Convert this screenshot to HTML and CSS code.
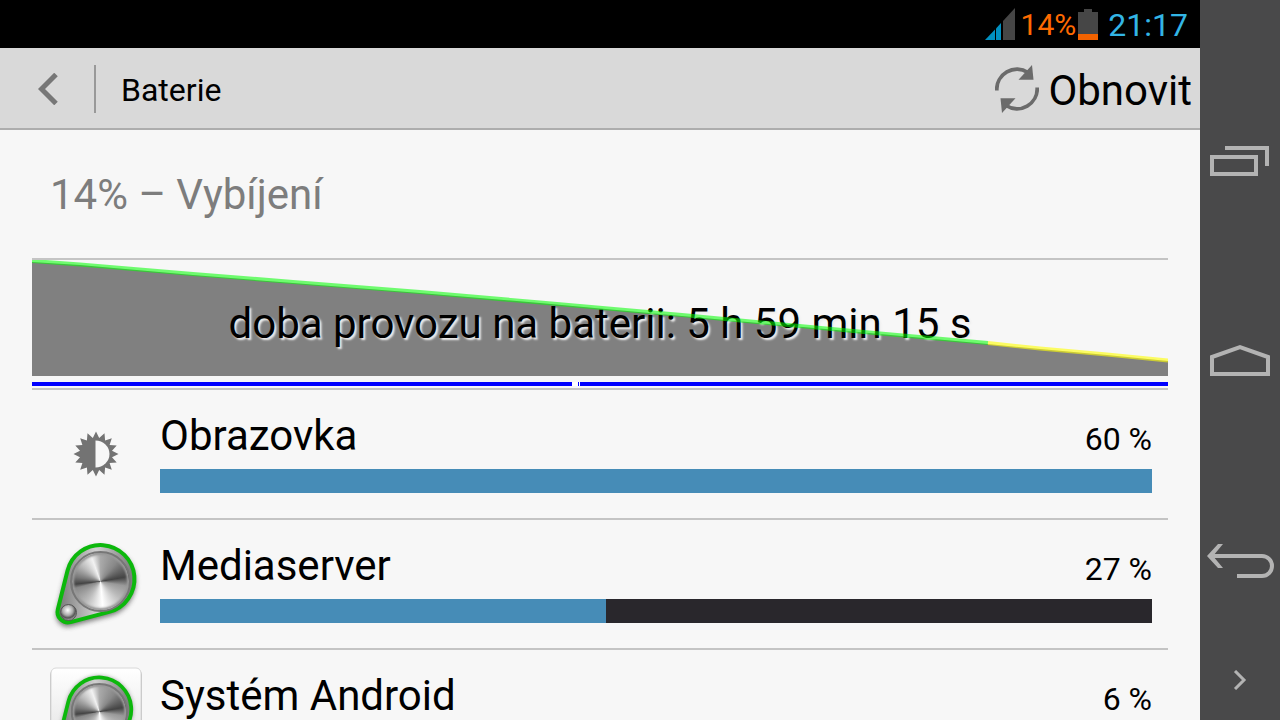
FILE: index.html
```html
<!DOCTYPE html>
<html lang="cs">
<head>
<meta charset="utf-8">
<meta name="viewport" content="width=device-width, initial-scale=1">
<title>Baterie</title>
<link rel="stylesheet" href="styles.css">
</head>
<body>
<div class="device">
  <div class="screen">
    <div class="status">
      <svg class="signal" width="30" height="32" viewBox="0 0 30 32" aria-hidden="true">
        <path d="M0 32 10 21.500V32Z" fill="#0090c1"/>
        <path d="M11 20.500 16 15V32H11Z" fill="#0090c1"/>
        <path d="M18 13 30 0V32H18Z" fill="#464646"/>
      </svg>
      <span class="status-level">14%</span>
      <svg class="cell" width="20" height="31" viewBox="0 0 20 31" aria-hidden="true">
        <path d="M6 0H14V3H20V25H0V3H6Z" fill="#464646"/>
        <path d="M0 25H20V31H0Z" fill="#f26200"/>
      </svg>
      <time class="clock">21:17</time>
    </div>
    <header class="bar">
      <button class="back" type="button" aria-label="Zpět">
        <svg width="20" height="32" viewBox="0 0 20 32"><path d="M18 1.500 3.500 16 18 30.500" fill="none" stroke="#777" stroke-width="5"/></svg>
      </button>
      <h1 class="title">Baterie</h1>
      <button class="refresh" type="button">
        <svg width="44" height="48" viewBox="0 0 44 48" aria-hidden="true">
          <g id="arc" fill="#6b6b6b">
            <path d="M1.800 25.500A20.200 20.200 0 0 1 33 7.500" fill="none" stroke="#6b6b6b" stroke-width="3.800"/>
            <path d="M37 0 38.500 14.800H23.500Z"/>
          </g>
          <use href="#arc" transform="rotate(180 22 24)"/>
        </svg>
        <span class="refresh-label">Obnovit</span>
      </button>
    </header>
    <main class="content">
      <h2 class="summary">14% – Vybíjení</h2>
      <section class="history">
        <div class="chart">
          <svg class="layer" viewBox="0 0 1136 116" preserveAspectRatio="none" aria-hidden="true">
            <path d="M0 2 48 5 161 15 261 23 388 33 508 43 650 56 848 74 956 84 1008 89 1075 95 1136 101V116H0Z" fill="#808080"/>
          </svg>
          <p class="runtime">doba provozu na baterii: 5 h 59 min 15 s</p>
          <svg class="layer" viewBox="0 0 1136 116" preserveAspectRatio="none" aria-hidden="true">
            <g fill="none" stroke-width="4">
              <path d="M0 1 48 4.500 161 14 261 22 388 32 508 42.500 650 55 848 73.500 956 83" stroke="#00ff00" stroke-opacity=".55"/>
              <path d="M956 83 1008 88.500 1075 94.500 1136 100.500" stroke="#ffff00" stroke-opacity=".6"/>
            </g>
          </svg>
        </div>
        <div class="activity"><i class="gap"></i><i class="gap"></i></div>
      </section>
      <ul class="usage">
        <li class="row">
          <svg class="icon" viewBox="-48 -48 96 96" aria-hidden="true">
            <path fill="#737373" d="M0-22.500 3.200-16 8.500-20.700 9.100-13.600 15.800-15.800 13.600-9.100 20.700-8.500 16-3.200 22.500 0 16 3.200 20.700 8.500 13.600 9.100 15.800 15.800 9.100 13.600 8.500 20.700 3.200 16 0 22.500-3.200 16-8.500 20.700-9.100 13.600-15.800 15.800-13.600 9.100-20.700 8.500-16 3.200-22.500 0-16-3.200-20.700-8.500-13.600-9.100-15.800-15.800-9.100-13.600-8.500-20.700-3.200-16Z"/>
            <path d="M-.5-13.500A14 13.500 0 0 1-.5 13.500Z" fill="#f7f7f7"/>
          </svg>
          <div class="body">
            <div class="line"><span class="name">Obrazovka</span><span class="share">60 %</span></div>
            <div class="track"><div class="fill" style="width:100%"></div></div>
          </div>
        </li>
        <li class="row">
          <svg class="icon" viewBox="0 0 96 96" aria-hidden="true">
            <defs>
              <filter id="soft" x="-20%" y="-20%" width="140%" height="140%"><feGaussianBlur stdDeviation="2.500"/></filter>
              <linearGradient id="plate" x1="0" y1="0" x2="1" y2="0"><stop offset="0" stop-color="#777"/><stop offset=".5" stop-color="#d0d0d0"/><stop offset="1" stop-color="#777"/></linearGradient>
              <linearGradient id="tile" x1="0" y1="0" x2="0" y2="1"><stop offset="0" stop-color="#fff"/><stop offset="1" stop-color="#ddd"/></linearGradient>
            </defs>
            <path d="M9.800 73.400 19.500 34.700A34 34 0 1 1 61.200 75.900L22.700 86.100A10.500 10.500 0 0 1 9.800 73.400Z" transform="translate(0 3)" fill="#555" stroke="#555" stroke-width="3" opacity=".75" filter="url(#soft)"/>
            <path d="M9.800 73.400 19.500 34.700A34 34 0 1 1 61.200 75.900L22.700 86.100A10.500 10.500 0 0 1 9.800 73.400Z" fill="url(#plate)" stroke="#0cb80c" stroke-width="4"/>
            <foreignObject x="22" y="15" width="61" height="61"><div class="knob"></div></foreignObject>
            <foreignObject x="12" y="68" width="17" height="17"><div class="knob knob-small"></div></foreignObject>
          </svg>
          <div class="body">
            <div class="line"><span class="name">Mediaserver</span><span class="share">27 %</span></div>
            <div class="track"><div class="fill" style="width:45%"></div></div>
          </div>
        </li>
        <li class="row">
          <svg class="icon" viewBox="0 0 96 96" aria-hidden="true">
            <rect x="2" y="3" width="92" height="92" rx="6" fill="#999" opacity=".6"/>
            <rect x="3" y="2" width="90" height="92" rx="5" fill="url(#tile)" stroke="#d8d8d8"/>
            <g transform="translate(2 3) scale(.94)">
              <path d="M9.800 73.400 19.500 34.700A34 34 0 1 1 61.200 75.900L22.700 86.100A10.500 10.500 0 0 1 9.800 73.400Z" fill="#555" stroke="#555" stroke-width="3" opacity=".6" filter="url(#soft)"/>
              <path d="M9.800 73.400 19.500 34.700A34 34 0 1 1 61.200 75.900L22.700 86.100A10.500 10.500 0 0 1 9.800 73.400Z" fill="url(#plate)" stroke="#0cb80c" stroke-width="4"/>
              <foreignObject x="22" y="15" width="61" height="61"><div class="knob"></div></foreignObject>
            </g>
          </svg>
          <div class="body">
            <div class="line"><span class="name">Systém Android</span><span class="share">6 %</span></div>
            <div class="track"><div class="fill" style="width:10%"></div></div>
          </div>
        </li>
      </ul>
    </main>
  </div>
  <nav class="keys" aria-label="Navigace">
    <button class="key" type="button" aria-label="Poslední aplikace">
      <svg width="72" height="40" viewBox="0 0 72 40"><g fill="none" stroke="#b3b3b3" stroke-width="4"><path d="M8 17H52V34H8Z"/><path d="M21 8H63V26"/></g></svg>
    </button>
    <button class="key" type="button" aria-label="Domů">
      <svg width="72" height="40" viewBox="0 0 72 40"><path d="M8 34V17L36 7 64 17V34Z" fill="none" stroke="#b3b3b3" stroke-width="4"/></svg>
    </button>
    <button class="key" type="button" aria-label="Zpět">
      <svg width="72" height="40" viewBox="0 0 72 40"><path d="M8 16H58A9.500 9.500 0 0 1 58 36H33" fill="none" stroke="#b3b3b3" stroke-width="4"/><path d="M3 16 14 4H19L9 16 19 28H14Z" fill="#b3b3b3"/></svg>
    </button>
    <button class="key" type="button" aria-label="Skrýt panel">
      <svg width="14" height="20" viewBox="0 0 14 20"><path d="M2 1 11 10 2 19" fill="none" stroke="#b3b3b3" stroke-width="3"/></svg>
    </button>
  </nav>
</div>
</body>
</html>
```
FILE: styles.css
```css
* {
  box-sizing: border-box;
}

body {
  margin: 0;
  font-family: Roboto, "Noto Sans", sans-serif;
  color: #000;
  background: #f7f7f7;
}

button {
  border: 0;
  padding: 0;
  background: none;
  font: inherit;
  color: inherit;
  cursor: pointer;
}

svg {
  display: block;
}

.device {
  display: flex;
  height: 100vh;
  overflow: hidden;
}

.screen {
  flex: 1;
  min-width: 0;
  display: flex;
  flex-direction: column;
}

.status {
  flex: none;
  display: flex;
  justify-content: flex-end;
  align-items: center;
  height: 48px;
  padding-right: 12px;
  background: #000;
  line-height: 48px;
}

.status-level {
  margin: 0 2px 0 6px;
  padding-top: 2px;
  font-size: 30px;
  color: #ff6a00;
}

.clock {
  margin-left: 10px;
  padding-top: 2px;
  font-size: 32px;
  color: #33b5e5;
}

.bar {
  flex: none;
  display: flex;
  align-items: center;
  height: 82px;
  padding: 2px 8px 0 0;
  background: #d9d9d9;
  border-bottom: 2px solid #adadad;
}

.back {
  display: flex;
  align-items: center;
  justify-content: center;
  width: 96px;
  height: 48px;
  padding-left: 2px;
  border-right: 2px solid #999;
}

.title {
  flex: 1;
  margin: 0 0 0 25px;
  padding-top: 2px;
  font-size: 32px;
  line-height: 48px;
  font-weight: 400;
}

.refresh {
  display: flex;
  align-items: center;
  gap: 9px;
  font-size: 42px;
  line-height: 48px;
}

.refresh-label {
  padding-top: 4px;
}

.content {
  flex: 1;
  min-height: 0;
  overflow: hidden;
  padding: 0 32px;
}

.summary {
  margin: 0;
  padding: 41px 18px 39px;
  border-bottom: 2px solid #c4c4c4;
  font-size: 42px;
  line-height: 48px;
  font-weight: 400;
  color: #7d7d7d;
}

.history {
  padding-bottom: 2px;
  border-bottom: 2px solid #c4c4c4;
}

.chart {
  display: grid;
  height: 116px;
}

.chart > * {
  grid-area: 1 / 1;
}

.layer {
  width: 100%;
  height: 116px;
}

.runtime {
  margin: 0;
  padding-top: 40px;
  text-align: center;
  font-size: 42px;
  line-height: 48px;
  text-shadow: 2px 2px 2px #eee;
}

.activity {
  display: flex;
  gap: 1px;
  height: 4px;
  margin-top: 6px;
  padding-left: 47.5%;
  background: #00f;
}

.gap {
  width: 6px;
  background: #fff;
}

.gap + .gap {
  width: 1px;
}

.usage {
  margin: 0;
  padding: 0;
  list-style: none;
}

.row {
  display: flex;
  align-items: center;
  gap: 16px;
  padding: 16px;
  border-bottom: 2px solid #c4c4c4;
}

.icon {
  flex: none;
  width: 96px;
  height: 96px;
}

.body {
  flex: 1;
  display: grid;
  gap: 6px;
  padding-top: 4px;
}

.line {
  display: flex;
  justify-content: space-between;
  align-items: baseline;
  line-height: 48px;
}

.name {
  font-size: 42px;
}

.share {
  font-size: 32px;
}

.track {
  height: 24px;
  margin-bottom: 8px;
  background: #29272c;
}

.fill {
  height: 100%;
  background: #468cb7;
}

.knob {
  width: 61px;
  height: 61px;
  border: 2px solid #777;
  border-radius: 50%;
  background: conic-gradient(#aaa, #888 40deg, #444 80deg, #999 100deg, #bbb 130deg, #fff 175deg, #bbb 215deg, #888 255deg, #444 264deg, #777 280deg, #bbb 310deg, #f2f2f2 340deg, #aaa);
  box-shadow: inset 0 0 2px 2px #999;
}

.knob-small {
  width: 17px;
  height: 17px;
  border: 1px solid #555;
  background: radial-gradient(circle at 45% 35%, #fff, #aaa 40%, #555 60%, #ddd 90%);
  box-shadow: none;
}

.keys {
  flex: none;
  display: grid;
  grid-template-rows: 5fr 5fr 5fr 1fr;
  width: 80px;
  padding: 60px 0 20px;
  background: #49494a;
}

.key {
  display: flex;
  align-items: center;
  justify-content: center;
}
```
